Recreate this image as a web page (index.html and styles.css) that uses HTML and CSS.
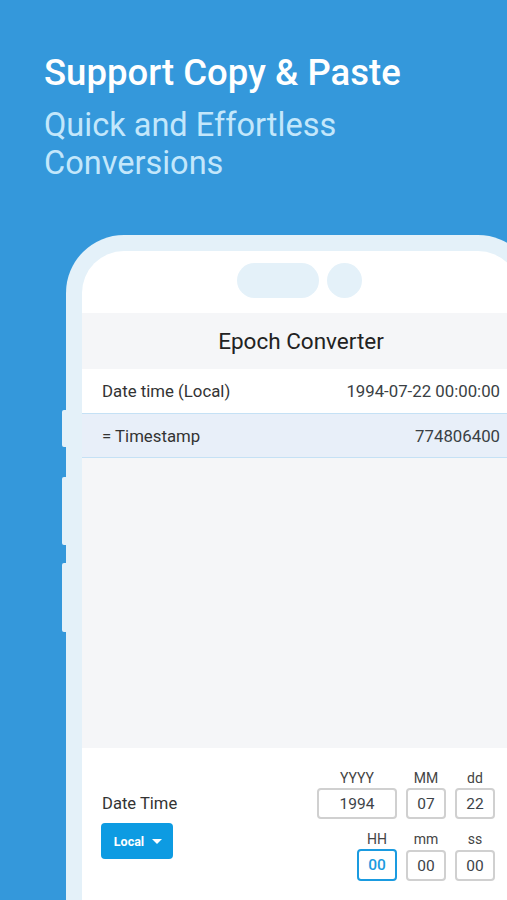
FILE: index.html
```html
<!DOCTYPE html>
<html>
<head>
<meta charset="utf-8">
<link rel="stylesheet" href="styles.css">
</head>
<body>
<div class="page">
  <div class="hero">
    <h1 class="title">Support Copy &amp; Paste</h1>
    <p class="subtitle">Quick and Effortless<br>Conversions</p>
  </div>
  <div class="phone">
    <div class="btn btn-1"></div>
    <div class="btn btn-2"></div>
    <div class="btn btn-3"></div>
    <div class="screen">
      <div class="status">
        <div class="pill"></div>
        <div class="dot"></div>
      </div>
      <div class="appbar">Epoch Converter</div>
      <div class="row">
        <span>Date time (Local)</span>
        <span class="val">1994-07-22 00:00:00</span>
      </div>
      <div class="row row-sel">
        <span>= Timestamp</span>
        <span class="val">774806400</span>
      </div>
      <div class="body"></div>
      <div class="panel">
        <div class="panel-left">
          <div class="dt-label">Date Time</div>
          <div class="local-btn">Local <span class="caret"></span></div>
        </div>
        <div class="fields">
          <div class="lbl">YYYY</div>
          <div class="lbl">MM</div>
          <div class="lbl">dd</div>
          <div class="box wide">1994</div>
          <div class="box">07</div>
          <div class="box">22</div>
          <div class="lbl lbl-r">HH</div>
          <div class="lbl">mm</div>
          <div class="lbl">ss</div>
          <div class="box box-r active">00</div>
          <div class="box">00</div>
          <div class="box">00</div>
        </div>
      </div>
    </div>
  </div>
</div>
</body>
</html>
```
FILE: styles.css
```css
* { box-sizing: border-box; }
html, body {
  margin: 0;
  padding: 0;
  background: #3498db;
  overflow: hidden;
}
.page {
  width: 507px;
  height: 900px;
  overflow: hidden;
  font-family: Roboto, "Liberation Sans", sans-serif;
}
.hero {
  padding: 51px 0 0 44px;
}
.title {
  margin: 0;
  font-size: 36.5px;
  font-weight: 500;
  color: #ffffff;
  line-height: 44px;
}
.subtitle {
  margin: 11px 0 0 0;
  font-size: 32.5px;
  font-weight: 400;
  color: #c3e7fb;
  line-height: 38px;
}
.phone {
  position: relative;
  margin: 53px 0 0 66px;
  width: 470px;
  height: 720px;
  background: #e4f1f9;
  border-radius: 58px 58px 0 0;
  padding: 16px 16px 0 16px;
}
.btn {
  position: absolute;
  left: -4px;
  width: 5px;
  background: #e4f1f9;
  border-radius: 2px 0 0 2px;
}
.btn-1 { top: 175px; height: 37px; }
.btn-2 { top: 242px; height: 68px; }
.btn-3 { top: 328px; height: 69px; }
.screen {
  background: #ffffff;
  border-radius: 42px 42px 0 0;
  height: 100%;
  overflow: hidden;
  display: flex;
  flex-direction: column;
}
.status {
  height: 62px;
  display: flex;
  justify-content: center;
  gap: 8px;
  padding: 12px 3px 0 0;
}
.pill {
  width: 82px;
  height: 35px;
  border-radius: 18px;
  background: #e4f1f9;
}
.dot {
  width: 35px;
  height: 35px;
  border-radius: 50%;
  background: #e4f1f9;
}
.appbar {
  height: 56px;
  background: #f5f6f8;
  display: flex;
  align-items: center;
  justify-content: center;
  font-size: 22.5px;
  color: #222;
}
.row {
  display: flex;
  justify-content: space-between;
  align-items: center;
  height: 44px;
  padding: 0 20px 0 20px;
  font-size: 16.8px;
  color: #333;
  background: #ffffff;
}
.row .val { color: #3a3f44; }
.row-sel {
  height: 45px;
  background: #e8eff9;
  border-top: 1px solid #c5e1f5;
  border-bottom: 1px solid #c5e1f5;
}
.body {
  height: 290px;
  background: #f5f6f8;
}
.panel {
  flex: 1;
  background: #ffffff;
  display: flex;
  justify-content: space-between;
  align-items: flex-start;
  padding: 20px 25px 0 19px;
}
.panel-left {
  padding-top: 26px;
}
.dt-label {
  font-size: 16.6px;
  color: #333;
  margin-left: 1px;
}
.local-btn {
  margin-top: 10px;
  width: 72px;
  height: 36px;
  background: #0d9be2;
  border-radius: 4px;
  color: #ffffff;
  font-size: 12.5px;
  font-weight: 700;
  display: flex;
  align-items: center;
  justify-content: center;
  gap: 8px;
  padding-left: 2px;
}
.caret {
  width: 0;
  height: 0;
  border-left: 5px solid transparent;
  border-right: 5px solid transparent;
  border-top: 5px solid #ffffff;
}
.fields {
  display: grid;
  grid-template-columns: 80px 40px 40px;
  column-gap: 9px;
  grid-template-rows: 20px 31px 30px 32px;
  align-items: end;
}
.lbl {
  font-size: 14px;
  color: #444;
  text-align: center;
  line-height: 16px;
  padding-bottom: 2px;
}
.lbl-r {
  justify-self: end;
  width: 40px;
}
.box {
  height: 31px;
  border: 2px solid #d0d0d0;
  border-radius: 4px;
  display: flex;
  align-items: center;
  justify-content: center;
  font-size: 15.5px;
  color: #3d4348;
  background: #fff;
}
.box-r {
  justify-self: end;
  width: 40px;
  height: 32px;
}
.active {
  border: 2px solid #1a9be0;
  color: #1a9be0;
  font-weight: 500;
}
```
